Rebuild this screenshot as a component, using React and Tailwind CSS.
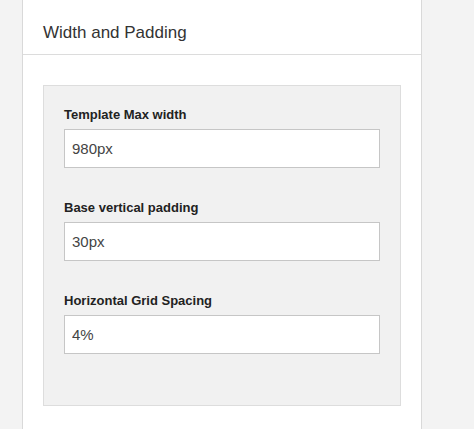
import React from "react";

const fields = [
  { label: "Template Max width", value: "980px" },
  { label: "Base vertical padding", value: "30px" },
  { label: "Horizontal Grid Spacing", value: "4%" },
];

export default function App() {
  return (
    <div
      className="h-[429px] w-[474px] overflow-hidden bg-[#f3f3f3]"
      style={{ fontFamily: '"Liberation Sans", Arial, sans-serif' }}
    >
      <div className="ml-[22px] h-full w-[400px] border-x border-[#d9d9d9] bg-white">
        <div className="flex h-[55px] items-end border-b border-[#dcdcdc] px-5 pb-[11px]">
          <h2 className="text-[17px] leading-5 text-[#333]">Width and Padding</h2>
        </div>
        <div className="px-5 pt-[30px]">
          <div className="border border-[#dddddd] bg-[#f1f1f1] px-5 pt-[21px] pb-[19px]">
            {fields.map((f) => (
              <div key={f.label} className="mb-8">
                <label className="block text-[13px] font-bold leading-4 text-[#222]">
                  {f.label}
                </label>
                <input
                  readOnly
                  value={f.value}
                  className="mt-[6px] block h-[39px] w-[316px] border border-[#c6c6c6] bg-white px-[7px] text-[15px] text-[#444] outline-none"
                  style={{ fontFamily: '"Liberation Sans", Arial, sans-serif' }}
                />
              </div>
            ))}
          </div>
        </div>
      </div>
    </div>
  );
}
